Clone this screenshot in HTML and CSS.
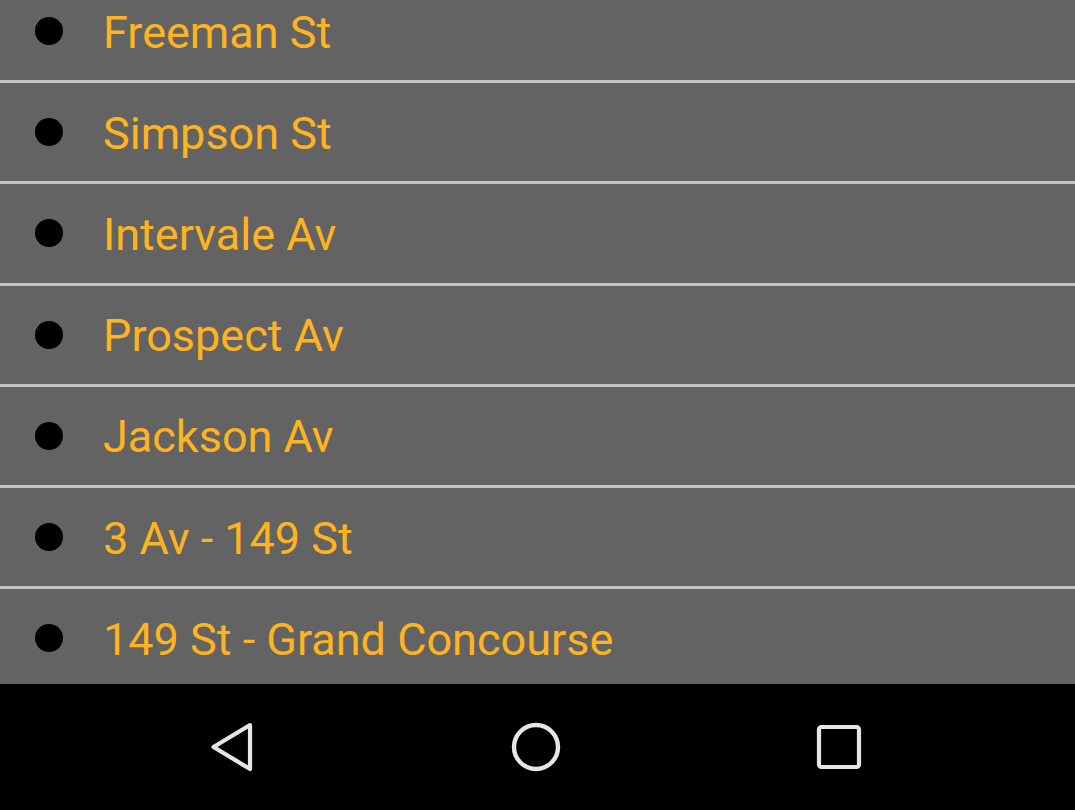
FILE: index.html
```html
<!DOCTYPE html>
<html>
<head>
<meta charset="utf-8">
<link rel="stylesheet" href="styles.css">
</head>
<body>
<div class="screen">
  <div class="viewport">
    <ul class="list">
      <li class="row"><span class="dot"></span><span class="name">Freeman St</span></li>
      <li class="row"><span class="dot"></span><span class="name">Simpson St</span></li>
      <li class="row"><span class="dot"></span><span class="name">Intervale Av</span></li>
      <li class="row"><span class="dot"></span><span class="name">Prospect Av</span></li>
      <li class="row"><span class="dot"></span><span class="name">Jackson Av</span></li>
      <li class="row"><span class="dot"></span><span class="name">3 Av - 149 St</span></li>
      <li class="row"><span class="dot"></span><span class="name">149 St - Grand Concourse</span></li>
    </ul>
  </div>
  <nav class="navbar">
    <svg class="nav-icon" width="60" height="60" viewBox="0 0 60 60">
      <path d="M50 8 L13.5 30 L50 52 Z" fill="none" stroke="#e6e6e6" stroke-width="4.2" stroke-linejoin="round"/>
    </svg>
    <svg class="nav-icon" width="60" height="60" viewBox="0 0 60 60">
      <circle cx="30" cy="30" r="22" fill="none" stroke="#e6e6e6" stroke-width="4.4"/>
    </svg>
    <svg class="nav-icon" width="60" height="60" viewBox="0 0 60 60">
      <rect x="10" y="10" width="40" height="40" rx="2.5" fill="none" stroke="#e6e6e6" stroke-width="4.2"/>
    </svg>
  </nav>
</div>
</body>
</html>
```

FILE: styles.css
```css
html, body {
  margin: 0;
  padding: 0;
  background: #000;
}
.screen {
  width: 1075px;
  height: 810px;
  display: flex;
  flex-direction: column;
  overflow: hidden;
  font-family: Roboto, "Noto Sans", sans-serif;
}
.viewport {
  height: 684px;
  overflow: hidden;
  background: #636363;
  flex: none;
}
.list {
  list-style: none;
  margin: -18px 0 0 0;
  padding: 0;
}
.row {
  height: 98.2px;
  border-bottom: 3px solid #c4c4c4;
  display: flex;
  align-items: center;
  background: #636363;
}
.dot {
  width: 28px;
  height: 28px;
  border-radius: 50%;
  background: #000;
  margin-left: 35px;
  margin-right: 40px;
  flex: none;
}
.name {
  color: #ffb41f;
  font-size: 45px;
  line-height: 1;
  position: relative;
  top: 1px;
}
.navbar {
  height: 126px;
  background: #000;
  display: flex;
  align-items: center;
  flex: none;
}
.nav-icon {
  display: block;
  flex: none;
}
.nav-icon:nth-child(1) { margin-left: 200px; }
.nav-icon:nth-child(2) { margin-left: 246px; }
.nav-icon:nth-child(3) { margin-left: 243px; }
```
